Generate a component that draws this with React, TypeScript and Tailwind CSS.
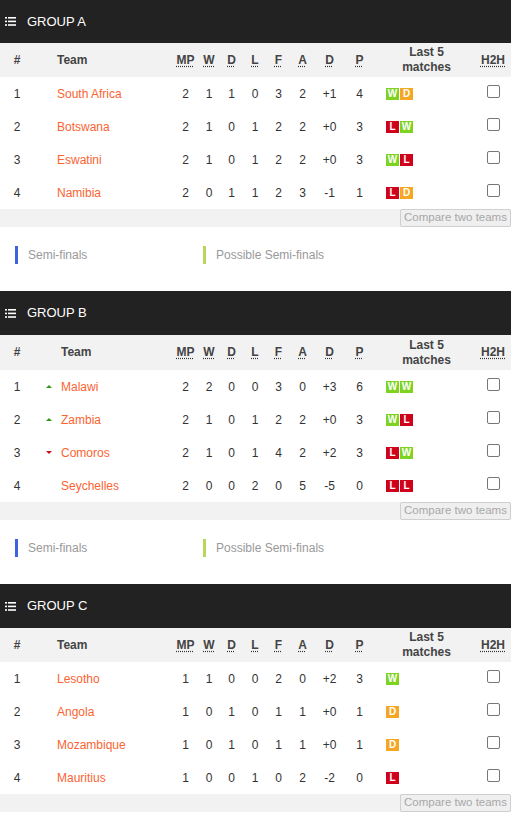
import React from "react";

type Row = [number, string, number, number, number, number, number, number, string, number, string[], string?];

const groups: { name: string; arrows?: boolean; legend: boolean; first?: boolean; rows: Row[] }[] = [
  {
    name: "GROUP A",
    legend: true,
    first: true,
    rows: [
      [1, "South Africa", 2, 1, 1, 0, 3, 2, "+1", 4, ["W", "D"]],
      [2, "Botswana", 2, 1, 0, 1, 2, 2, "+0", 3, ["L", "W"]],
      [3, "Eswatini", 2, 1, 0, 1, 2, 2, "+0", 3, ["W", "L"]],
      [4, "Namibia", 2, 0, 1, 1, 2, 3, "-1", 1, ["L", "D"]],
    ],
  },
  {
    name: "GROUP B",
    arrows: true,
    legend: true,
    rows: [
      [1, "Malawi", 2, 2, 0, 0, 3, 0, "+3", 6, ["W", "W"], "up"],
      [2, "Zambia", 2, 1, 0, 1, 2, 2, "+0", 3, ["W", "L"], "up"],
      [3, "Comoros", 2, 1, 0, 1, 4, 2, "+2", 3, ["L", "W"], "down"],
      [4, "Seychelles", 2, 0, 0, 2, 0, 5, "-5", 0, ["L", "L"]],
    ],
  },
  {
    name: "GROUP C",
    legend: false,
    rows: [
      [1, "Lesotho", 1, 1, 0, 0, 2, 0, "+2", 3, ["W"]],
      [2, "Angola", 1, 0, 1, 0, 1, 1, "+0", 1, ["D"]],
      [3, "Mozambique", 1, 0, 1, 0, 1, 1, "+0", 1, ["D"]],
      [4, "Mauritius", 1, 0, 0, 1, 0, 2, "-2", 0, ["L"]],
    ],
  },
];

const GRID =
  "grid grid-cols-[34px_139px_25px_22px_23px_24px_23px_25px_29px_31px_103px_33px]";

function Badge({ r }: { r: string }) {
  const bg = r === "W" ? "bg-[#7ed321]" : r === "D" ? "bg-[#f5a623]" : "bg-[#d0021b]";
  return (
    <span
      className={`${bg} flex h-[12px] w-[13px] items-center justify-center text-[10px] font-bold leading-none text-white`}
    >
      {r}
    </span>
  );
}

function Abbr({ children }: { children: React.ReactNode }) {
  return (
    <span className="underline decoration-dotted decoration-[#333] underline-offset-[2px]">
      {children}
    </span>
  );
}

function ListIcon() {
  return (
    <svg width="11" height="9" viewBox="0 0 11 9" className="block">
      <rect x="0" y="0" width="2" height="1.6" fill="#fff" />
      <rect x="3" y="0" width="8" height="1.6" fill="#fff" />
      <rect x="0" y="3.6" width="2" height="1.6" fill="#fff" />
      <rect x="3" y="3.6" width="8" height="1.6" fill="#fff" />
      <rect x="0" y="7.2" width="2" height="1.6" fill="#fff" />
      <rect x="3" y="7.2" width="8" height="1.6" fill="#fff" />
    </svg>
  );
}

function Group({ g }: { g: (typeof groups)[number] }) {
  const cell = "flex items-center justify-center";
  return (
    <div>
      <div className={`flex items-center bg-[#222] pl-[5px] ${g.first ? "h-[43px]" : "h-[44px]"}`}>
        <ListIcon />
        <span className="ml-[11px] text-[13px] text-white">{g.name}</span>
      </div>
      <div
        className={`${GRID} ${g.arrows ? "h-[35px]" : "h-[34px]"} bg-[#f2f2f2] text-[12px] font-bold leading-[15px] text-[#444]`}
      >
        <div className={cell}>#</div>
        <div className={`flex items-center ${g.arrows ? "pl-[27px]" : "pl-[23px]"}`}>Team</div>
        <div className={cell}><Abbr>MP</Abbr></div>
        <div className={cell}><Abbr>W</Abbr></div>
        <div className={cell}><Abbr>D</Abbr></div>
        <div className={cell}><Abbr>L</Abbr></div>
        <div className={cell}><Abbr>F</Abbr></div>
        <div className={cell}><Abbr>A</Abbr></div>
        <div className={cell}><Abbr>D</Abbr></div>
        <div className={cell}><Abbr>P</Abbr></div>
        <div className={`${cell} text-center`}>Last 5<br />matches</div>
        <div className={`${cell} pr-[3px]`}><Abbr>H2H</Abbr></div>
      </div>
      {g.rows.map((r) => (
        <div key={r[0]} className={`${GRID} h-[33px] bg-white text-[12px] text-[#333]`}>
          <div className={cell}>{r[0]}</div>
          <div className={`flex items-center ${g.arrows ? "pl-[12px]" : "pl-[23px]"}`}>
            {g.arrows && (
              <span className="mr-[9px] flex w-[6px] items-center justify-center">
                {r[11] === "up" && (
                  <span className="h-0 w-0 border-x-[3px] border-b-[3px] border-x-transparent border-b-[#2f9a12]" />
                )}
                {r[11] === "down" && (
                  <span className="h-0 w-0 border-x-[3px] border-t-[3px] border-x-transparent border-t-[#cc0f1c]" />
                )}
              </span>
            )}
            <span className="text-[#fa6432]">{r[1]}</span>
          </div>
          {[r[2], r[3], r[4], r[5], r[6], r[7], r[8], r[9]].map((v, i) => (
            <div key={i} className={cell}>{v}</div>
          ))}
          <div className="flex items-center gap-[1px] pl-[11px]">
            {r[10].map((x, i) => (
              <Badge key={i} r={x} />
            ))}
          </div>
          <div className={`${cell} pr-[3px]`}>
            <span className="mb-[4px] block h-[13px] w-[13px] rounded-[2px] border border-[#767676] bg-white" />
          </div>
        </div>
      ))}
      <div className="flex h-[18px] justify-end bg-[#f2f2f2]">
        <div className="flex h-[18px] w-[111px] items-center justify-center rounded-[2px] border border-[#cfcfcf] bg-[#efefef] text-[11.5px] leading-none text-[#a8a8a8]">
          Compare two teams
        </div>
      </div>
      {g.legend && (
        <div className="flex h-[64px] items-start bg-white pl-[15px] pt-[19px] text-[12px] text-[#999]">
          <div className="flex w-[188px] items-center">
            <span className="h-[18px] w-[3px] bg-[#3d63dd]" />
            <span className="ml-[10px]">Semi-finals</span>
          </div>
          <div className="flex items-center">
            <span className="h-[18px] w-[3px] bg-[#b7d65a]" />
            <span className="ml-[10px]">Possible Semi-finals</span>
          </div>
        </div>
      )}
    </div>
  );
}

export default function App() {
  return (
    <div className="min-h-[815px] w-[517px] bg-white" style={{ fontFamily: '"Liberation Sans", Arial, sans-serif' }}>
      <div className="w-[511px]">
        {groups.map((g) => (
          <Group key={g.name} g={g} />
        ))}
      </div>
    </div>
  );
}
